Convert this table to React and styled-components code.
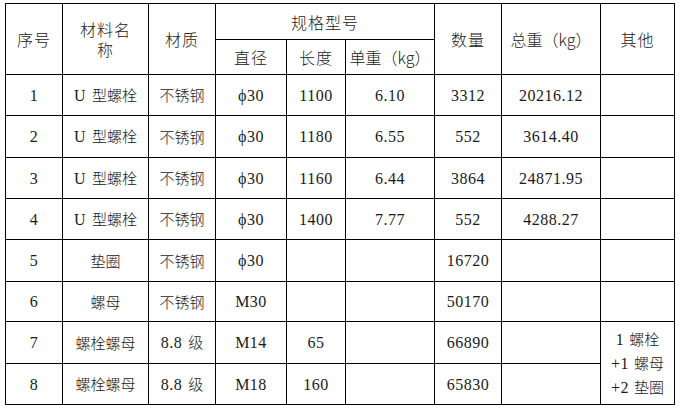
import React from "react";
import styled, { createGlobalStyle } from "styled-components";

const Global = createGlobalStyle`
  html, body { margin: 0; padding: 0; background: #fff; }
  body { font-family: "Noto Sans CJK SC", sans-serif; }
`;

const Page = styled.div`
  padding: 3px 0 0 5px;
`;

const Table = styled.table`
  border-collapse: collapse;
  table-layout: fixed;
  width: 670px;
  color: #222;
`;

const Col = styled.col`
  width: ${(p) => p.$w}px;
`;

const Row = styled.tr`
  height: ${(p) => p.$h}px;
`;

const HeadCell = styled.th`
  border: 1px solid #000;
  padding: 0;
  font-weight: 300;
  font-size: 16px;
  letter-spacing: ${(p) => (p.$tight ? 0 : 1)}px;
  line-height: 20px;
  text-align: center;
  vertical-align: middle;
`;

const Cell = styled.td`
  border: 1px solid #000;
  padding: 0;
  font-weight: 300;
  font-size: 15px;
  line-height: ${(p) => (p.$multi ? 23 : 20)}px;
  text-align: center;
  vertical-align: middle;
  white-space: nowrap;
`;

const Latin = styled.span`
  font-family: "Liberation Serif", serif;
  font-size: 16px;
  letter-spacing: 0.5px;
  color: #1a1a1a;
`;

const Gap = styled.span`
  display: inline-block;
  width: ${(p) => p.$w}px;
`;

const cols = [57, 86, 67, 71, 59, 89, 67, 99, 74];
const heights = [41, 42, 41, 41, 42, 40, 42, 41];

const rows = [
  ["1", ["U", "型螺栓"], "不锈钢", "ϕ30", "1100", "6.10", "3312", "20216.12"],
  ["2", ["U", "型螺栓"], "不锈钢", "ϕ30", "1180", "6.55", "552", "3614.40"],
  ["3", ["U", "型螺栓"], "不锈钢", "ϕ30", "1160", "6.44", "3864", "24871.95"],
  ["4", ["U", "型螺栓"], "不锈钢", "ϕ30", "1400", "7.77", "552", "4288.27"],
  ["5", "垫圈", "不锈钢", "ϕ30", "", "", "16720", ""],
  ["6", "螺母", "不锈钢", "M30", "", "", "50170", ""],
  ["7", "螺栓螺母", ["8.8", "级"], "M14", "65", "", "66890", ""],
  ["8", "螺栓螺母", ["8.8", "级"], "M18", "160", "", "65830", ""],
];

const isLatin = (s) => /^[0-9A-Za-z.ϕ+]+$/.test(s);

function Content({ value }) {
  if (Array.isArray(value)) {
    return (
      <>
        <Latin>{value[0]}</Latin>
        <Gap $w={6} />
        {value[1]}
      </>
    );
  }
  if (value && isLatin(value)) return <Latin>{value}</Latin>;
  return value;
}

export default function App() {
  return (
    <Page>
      <Global />
      <Table>
        <colgroup>
          {cols.map((w, i) => (
            <Col key={i} $w={w} />
          ))}
        </colgroup>
        <thead>
          <Row $h={36}>
            <HeadCell rowSpan={2}>序号</HeadCell>
            <HeadCell rowSpan={2}>
              材料名
              <br />称
            </HeadCell>
            <HeadCell rowSpan={2}>材质</HeadCell>
            <HeadCell colSpan={3}>规格型号</HeadCell>
            <HeadCell rowSpan={2}>数量</HeadCell>
            <HeadCell rowSpan={2} $tight>
              总重（kg）
            </HeadCell>
            <HeadCell rowSpan={2}>其他</HeadCell>
          </Row>
          <Row $h={35}>
            <HeadCell>直径</HeadCell>
            <HeadCell>长度</HeadCell>
            <HeadCell $tight>单重（kg）</HeadCell>
          </Row>
        </thead>
        <tbody>
          {rows.map((r, i) => (
            <Row key={i} $h={heights[i]}>
              {r.map((v, j) => (
                <Cell key={j}>
                  <Content value={v} />
                </Cell>
              ))}
              {i < 6 && <Cell />}
              {i === 6 && (
                <Cell rowSpan={2} $multi>
                  <Latin>1</Latin>
                  <Gap $w={5} />
                  螺栓
                  <br />
                  <Latin>+1</Latin>
                  <Gap $w={5} />
                  螺母
                  <br />
                  <Latin>+2</Latin>
                  <Gap $w={5} />
                  垫圈
                </Cell>
              )}
            </Row>
          ))}
        </tbody>
      </Table>
    </Page>
  );
}
